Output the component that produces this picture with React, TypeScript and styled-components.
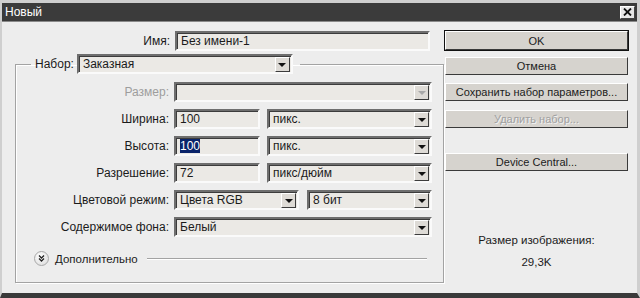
import styled, { createGlobalStyle } from "styled-components"

const Global = createGlobalStyle`
  html, body { margin: 0; padding: 0; background: #c9c9c9; }
  body { font-family: "Liberation Sans", Tahoma, sans-serif; font-size: 12px; color: #1b1b1b; }
`

const Window = styled.div`
  width: 640px;
  height: 298px;
  box-sizing: border-box;
  border-top: 3px solid #cfcfcf;
  border-left: 2px solid #cfcfcf;
  border-right: 3px solid #cfcfcf;
  border-bottom: 5px solid #3a3a3a;
  display: flex;
  flex-direction: column;
  background: #ededed;
`

const TitleBar = styled.div`
  height: 18px;
  background: #3b3b3b;
  color: #fff;
  display: flex;
  align-items: center;
  justify-content: space-between;
  padding: 0 2px 0 3px;
  font-size: 12px;
`

const CloseBox = styled.div`
  width: 15px;
  height: 13px;
  box-sizing: border-box;
  background: #e6e6e6;
  border: 1px solid;
  border-color: #fff #444 #444 #fff;
  display: flex;
  align-items: center;
  justify-content: center;
`

const Body = styled.div`
  flex: 1;
  display: flex;
  padding: 9px 0 0 0;
  border-top: 1px solid #8a8a8a;
`

const LeftPane = styled.div`
  width: 428px;
  display: flex;
  flex-direction: column;
`

const RightPane = styled.div`
  margin-left: 15px;
  width: 183px;
  display: flex;
  flex-direction: column;
`

const Row = styled.div<{ $label: number }>`
  display: grid;
  grid-template-columns: ${p => p.$label}px 1fr;
  column-gap: 5px;
  align-items: center;
  height: 20px;
`

const Label = styled.span<{ $disabled?: boolean }>`
  text-align: right;
  white-space: nowrap;
  color: ${p => (p.$disabled ? "#9d9d9d" : "#1b1b1b")};
`

const Fields = styled.div<{ $cols: string; $gap: number }>`
  display: grid;
  grid-template-columns: ${p => p.$cols};
  column-gap: ${p => p.$gap}px;
  height: 100%;
`

const Sunken = styled.div`
  box-sizing: border-box;
  height: 20px;
  background: #ebe9e5;
  border: 2px solid;
  border-color: #6e6e6e #fafafa #fafafa #6e6e6e;
  box-shadow: inset 1px 1px 0 #3c3c3c;
  display: flex;
  align-items: center;
  padding-left: 4px;
  white-space: nowrap;
  overflow: hidden;
`

const SelectBox = styled(Sunken)`
  padding-right: 1px;
  justify-content: space-between;
`

const Arrow = styled.div<{ $disabled?: boolean }>`
  width: 15px;
  height: 15px;
  box-sizing: border-box;
  background: #dedbd6;
  border: 1px solid;
  border-color: #fff #3c3c3c #3c3c3c #fff;
  display: flex;
  align-items: center;
  justify-content: center;
  &::after {
    content: "";
    border-left: 4px solid transparent;
    border-right: 4px solid transparent;
    border-top: 4px solid ${p => (p.$disabled ? "#a8a8a8" : "#111")};
    margin-top: 1px;
  }
`

const Selected = styled.span`
  background: #0a246a;
  color: #fff;
`

const Group = styled.fieldset`
  margin: 3px 0 0 13px;
  padding: 8px 11px 0 0;
  width: 416px;
  height: 219px;
  box-sizing: content-box;
  border: 1px solid #a3a3a3;
  box-shadow: inset 1px 1px 0 #fff, 1px 1px 0 #fff;
  display: flex;
  flex-direction: column;
  gap: 7px;
`

const Legend = styled.legend`
  margin-left: 15px;
  padding: 0 7px 0 4px;
  display: flex;
  align-items: center;
  gap: 3px;
`

const Advanced = styled.div`
  display: flex;
  align-items: center;
  margin: 7px 0 0 18px;
  gap: 6px;
  font-size: 11.5px;
`

const RoundIcon = styled.div`
  width: 13px;
  height: 13px;
  border-radius: 50%;
  background: radial-gradient(circle at 40% 35%, #fff, #d8d8d8);
  border: 1px solid #a8a8a8;
  display: flex;
  align-items: center;
  justify-content: center;
`

const Rule = styled.div`
  flex: 1;
  height: 1px;
  background: #a3a3a3;
  box-shadow: 0 1px 0 #fff;
  margin: 0 5px 0 3px;
`

const Button = styled.div<{ $default?: boolean; $disabled?: boolean; $gap: number }>`
  box-sizing: border-box;
  height: ${p => (p.$default ? 19 : 18)}px;
  margin-top: ${p => p.$gap}px;
  background: #d6d3ce;
  border: 1px solid;
  border-color: #fff #3a3a3a #3a3a3a #fff;
  outline: ${p => (p.$default ? "1px solid #111" : "none")};
  display: flex;
  align-items: center;
  justify-content: center;
  font-size: 11px;
  color: ${p => (p.$disabled ? "#a0a0a0" : "#1b1b1b")};
  text-shadow: ${p => (p.$disabled ? "1px 1px 0 #f2f2f2" : "none")};
`

const Info = styled.div`
  margin-top: 58px;
  text-align: center;
  line-height: 22px;
  font-size: 11.5px;
`

const ChevronIcon = () => (
  <svg width="7" height="7" viewBox="0 0 7 7">
    <path d="M1 0.5 L3.5 3 L6 0.5 M1 3.5 L3.5 6 L6 3.5" stroke="#222" strokeWidth="1.3" fill="none" />
  </svg>
)

const Select = ({ value, disabled }: { value?: string; disabled?: boolean }) => (
  <SelectBox>
    <span>{value}</span>
    <Arrow $disabled={disabled} />
  </SelectBox>
)

export default function App() {
  return (
    <>
      <Global />
      <Window>
        <TitleBar>
          <span>Новый</span>
          <CloseBox>
            <svg width="9" height="8" viewBox="0 0 9 8">
              <path d="M1 0.5 L8 7.5 M8 0.5 L1 7.5" stroke="#111" strokeWidth="1.8" />
            </svg>
          </CloseBox>
        </TitleBar>
        <Body>
          <LeftPane>
            <Row $label={168}>
              <Label>Имя:</Label>
              <Sunken>Без имени-1</Sunken>
            </Row>
            <Group>
              <Legend>
                <Label>Набор:</Label>
                <div style={{ width: 216 }}>
                  <Select value="Заказная" />
                </div>
              </Legend>
              <Row $label={153}>
                <Label $disabled>Размер:</Label>
                <Select disabled />
              </Row>
              <Row $label={153}>
                <Label>Ширина:</Label>
                <Fields $cols="86px 1fr" $gap={7}>
                  <Sunken>100</Sunken>
                  <Select value="пикс." />
                </Fields>
              </Row>
              <Row $label={153}>
                <Label>Высота:</Label>
                <Fields $cols="86px 1fr" $gap={7}>
                  <Sunken>
                    <Selected>100</Selected>
                  </Sunken>
                  <Select value="пикс." />
                </Fields>
              </Row>
              <Row $label={153}>
                <Label>Разрешение:</Label>
                <Fields $cols="86px 1fr" $gap={7}>
                  <Sunken>72</Sunken>
                  <Select value="пикс/дюйм" />
                </Fields>
              </Row>
              <Row $label={153}>
                <Label>Цветовой режим:</Label>
                <Fields $cols="125px 1fr" $gap={8}>
                  <Select value="Цвета RGB" />
                  <Select value="8 бит" />
                </Fields>
              </Row>
              <Row $label={153}>
                <Label>Содержимое фона:</Label>
                <Select value="Белый" />
              </Row>
              <Advanced>
                <RoundIcon>
                  <ChevronIcon />
                </RoundIcon>
                <span>Дополнительно</span>
                <Rule />
              </Advanced>
            </Group>
          </LeftPane>
          <RightPane>
            <Button $default $gap={0}>OK</Button>
            <Button $gap={7}>Отмена</Button>
            <Button $gap={8}>Сохранить набор параметров...</Button>
            <Button $disabled $gap={9}>Удалить набор...</Button>
            <Button $gap={25}>Device Central...</Button>
            <Info>
              <div>Размер изображения:</div>
              <div>29,3K</div>
            </Info>
          </RightPane>
        </Body>
      </Window>
    </>
  )
}
